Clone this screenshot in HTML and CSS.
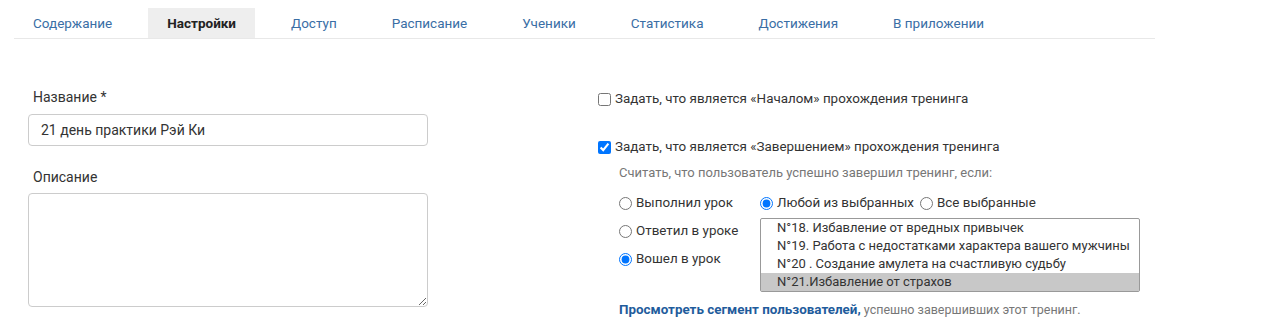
FILE: index.html
```html
<!DOCTYPE html>
<html lang="ru">
<head>
  <meta charset="UTF-8">
  <title>Настройки тренинга</title>
  <link rel="stylesheet" href="styles.css">
</head>
<body>
  <nav class="tabs">
    <a class="tab" href="#">Содержание</a>
    <a class="tab active" href="#">Настройки</a>
    <a class="tab" href="#">Доступ</a>
    <a class="tab" href="#">Расписание</a>
    <a class="tab" href="#">Ученики</a>
    <a class="tab" href="#">Статистика</a>
    <a class="tab" href="#">Достижения</a>
    <a class="tab" href="#">В приложении</a>
  </nav>

  <div class="settings">
    <div class="left-col">
      <label class="field-label" for="title">Название *</label>
      <input class="text-input" id="title" type="text" value="21 день практики Рэй Ки">

      <label class="field-label desc-label" for="desc">Описание</label>
      <textarea class="text-area" id="desc"></textarea>
    </div>

    <div class="right-col">
      <label class="check-row">
        <input type="checkbox">
        <span>Задать, что является «Началом» прохождения тренинга</span>
      </label>

      <label class="check-row finish-row">
        <input type="checkbox" checked>
        <span>Задать, что является «Завершением» прохождения тренинга</span>
      </label>

      <div class="finish-block">
        <div class="hint">Считать, что пользователь успешно завершил тренинг, если:</div>

        <div class="cond">
          <div class="cond-types">
            <label class="radio-row"><input type="radio" name="type"> Выполнил урок</label>
            <label class="radio-row"><input type="radio" name="type"> Ответил в уроке</label>
            <label class="radio-row"><input type="radio" name="type" checked> Вошел в урок</label>
          </div>

          <div class="cond-lessons">
            <div class="mode">
              <label class="radio-row"><input type="radio" name="mode" checked> Любой из выбранных</label>
              <label class="radio-row"><input type="radio" name="mode"> Все выбранные</label>
            </div>
            <div class="lesson-list">
              <div class="lesson">N°18. Избавление от вредных привычек</div>
              <div class="lesson">N°19. Работа с недостатками характера вашего мужчины</div>
              <div class="lesson">N°20 . Создание амулета на счастливую судьбу</div>
              <div class="lesson selected">N°21.Избавление от страхов</div>
            </div>
          </div>
        </div>

        <div class="segment">
          <a href="#">Просмотреть сегмент пользователей,</a> успешно завершивших этот тренинг.
        </div>
      </div>
    </div>
  </div>
</body>
</html>
```

FILE: styles.css
```css
body {
  margin: 0;
  font-family: Roboto, "Liberation Sans", sans-serif;
  font-size: 14px;
  color: #333;
  background: #fff;
}

a {
  text-decoration: none;
}

.tabs {
  display: flex;
  margin: 8px 113px 0 14px;
  border-bottom: 1px solid #e8e8e8;
}

.tab {
  display: block;
  height: 30px;
  line-height: 30px;
  padding: 0 19px;
  margin-right: 17px;
  font-size: 13.5px;
  color: #3a6ea5;
}

.tab.active {
  background: #eee;
  color: #222;
  font-weight: bold;
}

.settings {
  display: flex;
  padding: 49px 0 0 28px;
}

.left-col {
  width: 400px;
  display: flex;
  flex-direction: column;
}

.field-label {
  padding-left: 5px;
  line-height: 18px;
  margin-bottom: 8px;
}

.desc-label {
  margin-top: 22px;
  margin-bottom: 7px;
}

.text-input {
  height: 32px;
  box-sizing: border-box;
  border: 1px solid #ccc;
  border-radius: 4px;
  padding: 0 12px;
  font: inherit;
  color: #333;
}

.text-area {
  height: 114px;
  box-sizing: border-box;
  border: 1px solid #ccc;
  border-radius: 4px;
  font: inherit;
  resize: vertical;
}

.right-col {
  margin-left: 170px;
  padding-top: 2px;
  font-size: 13.4px;
}

.check-row {
  display: flex;
  align-items: center;
  line-height: 18px;
}

.check-row input {
  margin: 0 4px 0 0;
  width: 13px;
  height: 13px;
}

.finish-row {
  margin-top: 30px;
}

.finish-block {
  padding-left: 21px;
}

.hint {
  color: #777;
  font-size: 13px;
  margin-top: 8px;
  line-height: 18px;
}

.cond {
  display: flex;
  margin-top: 12px;
}

.cond-types {
  width: 141px;
  display: flex;
  flex-direction: column;
  gap: 10px;
}

.radio-row {
  display: flex;
  align-items: center;
  line-height: 18px;
  white-space: nowrap;
}

.radio-row input {
  margin: 0 4px 0 0;
  width: 13px;
  height: 13px;
}

.mode {
  display: flex;
  gap: 6px;
}

.lesson-list {
  margin-top: 6px;
  width: 380px;
  box-sizing: border-box;
  border: 1px solid #999;
  border-radius: 2px;
}

.lesson {
  padding-left: 16px;
  font-size: 13px;
  line-height: 18px;
  white-space: nowrap;
  overflow: hidden;
}

.lesson.selected {
  background: #c8c8c8;
}

.segment {
  margin-top: 10px;
  font-size: 12.5px;
  color: #777;
}

.segment a {
  color: #1f5c9c;
  font-size: 13.4px;
  font-weight: bold;
}
```
